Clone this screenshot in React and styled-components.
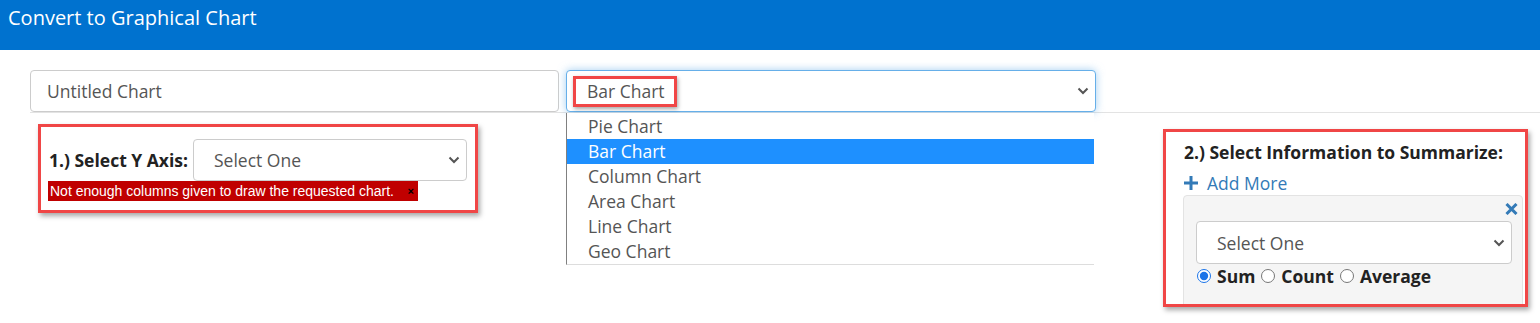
import React from "react";
import styled, { createGlobalStyle } from "styled-components";

const Global = createGlobalStyle`
  html, body { margin: 0; padding: 0; background: #fff; }
  body { font-family: "Open Sans", "Noto Sans", sans-serif; color: #333; }
`;

const Page = styled.div`
  width: 1540px;
  height: 323px;
  overflow: hidden;
  position: relative;
`;

const Header = styled.header`
  height: 50px;
  background: #0072cf;
  padding: 4px 0 0 8px;
  box-sizing: border-box;
`;

const Title = styled.h1`
  margin: 0;
  font-size: 20px;
  font-weight: 400;
  line-height: 27px;
  color: #fff;
`;

const Body = styled.div`
  padding: 20px 0 0 30px;
`;

const TopRow = styled.div`
  display: flex;
  gap: 7px;
  border-bottom: 1px solid #e3e3e3;
`;

const Field = styled.div`
  box-sizing: border-box;
  width: ${(p) => p.$w}px;
  height: ${(p) => p.$h || 42}px;
  border: 1px solid ${(p) => (p.$focus ? "#66afe9" : "#ccc")};
  box-shadow: ${(p) => (p.$focus ? "0 0 8px rgba(102,175,233,.6)" : "none")};
  border-radius: 4px;
  display: flex;
  align-items: center;
  padding: 0 ${(p) => p.$pr || 0}px 0 ${(p) => p.$pl}px;
  font-size: 17.5px;
  color: #555;
  background: #fff;
  position: relative;
`;

const FieldText = styled.span`
  flex: 1;
  white-space: nowrap;
`;

const Chevron = styled.svg`
  width: 12px;
  height: 8px;
  flex: none;
`;

const SelectWrap = styled.div`
  position: relative;
`;

const Annot = styled.span`
  position: absolute;
  left: ${(p) => p.$l}px;
  top: ${(p) => p.$t}px;
  width: ${(p) => p.$w}px;
  height: ${(p) => p.$h}px;
  border: 3px solid #f04646;
  box-sizing: border-box;
  box-shadow: 1px 2px 4px rgba(0, 0, 0, 0.35);
`;

const Dropdown = styled.ul`
  position: absolute;
  left: 0;
  top: calc(100% + 1px);
  width: 528px;
  margin: 0;
  padding: 1px 0 0;
  list-style: none;
  background: #fff;
  border-left: 1px solid #808080;
  border-bottom: 1px solid #ddd;
  box-sizing: border-box;
  z-index: 5;
`;

const Option = styled.li`
  height: 25px;
  line-height: 25px;
  padding-left: 21px;
  font-size: 17.5px;
  color: ${(p) => (p.$sel ? "#fff" : "#555")};
  background: ${(p) => (p.$sel ? "#1e90ff" : "transparent")};
`;

const Sections = styled.div`
  display: flex;
  justify-content: space-between;
  align-items: flex-start;
  padding: 0 12px 0 8px;
`;

const RedBox = styled.section`
  box-sizing: border-box;
  width: ${(p) => p.$w}px;
  height: ${(p) => p.$h}px;
  margin-top: ${(p) => p.$mt}px;
  border: 3px solid #f04646;
  box-shadow: 2px 3px 5px rgba(0, 0, 0, 0.35);
  overflow: hidden;
  padding: ${(p) => p.$pad};
`;

const AxisRow = styled.div`
  display: flex;
  align-items: center;
  gap: 5px;
`;

const Label = styled.span`
  font-size: 17.5px;
  font-weight: 700;
  color: #222;
  white-space: nowrap;
`;

const ErrorBar = styled.div`
  width: 370px;
  height: 20px;
  background: #c00000;
  display: flex;
  align-items: center;
  padding: 0 4px 0 2px;
  box-sizing: border-box;
  font-family: "Liberation Sans", Arial, sans-serif;
  font-size: 14px;
  color: #fff;
  margin-left: -1px;
`;

const ErrorText = styled.span`
  flex: 1;
  white-space: nowrap;
`;

const ErrorClose = styled.span`
  color: #000;
  font-size: 11px;
  font-weight: 700;
`;

const BoxTitle = styled.div`
  font-size: 17.5px;
  font-weight: 700;
  line-height: 24px;
  color: #222;
  white-space: nowrap;
  margin-top: 8px;
`;

const AddMore = styled.a`
  display: flex;
  align-items: center;
  gap: 9px;
  margin-top: 7px;
  height: 24px;
  font-size: 17.5px;
  color: #337ab7;
  text-decoration: none;
`;

const Panel = styled.div`
  box-sizing: border-box;
  width: 340px;
  height: 130px;
  margin: 0 0 0 -1px;
  background: #f5f5f5;
  border: 1px solid #e3e3e3;
  border-radius: 4px;
  padding: 7px 10px 0 12px;
`;

const CloseRow = styled.div`
  display: flex;
  justify-content: flex-end;
  height: 12px;
  margin-right: -6px;
  margin-bottom: 6px;
`;

const RadioRow = styled.div`
  display: flex;
  align-items: center;
  margin-top: 0;
  font-size: 17.5px;
  font-weight: 700;
  color: #222;
`;

const Radio = styled.input.attrs({ type: "radio" })`
  width: 14px;
  height: 14px;
  margin: 0 6px 0 1px;
  accent-color: #1a73e8;
`;

const RadioLabel = styled.label`
  display: flex;
  align-items: center;
  margin-right: 5px;
`;

const ChevronIcon = () => (
  <Chevron viewBox="0 0 12 8">
    <path d="M1.5 1.5 L6 6 L10.5 1.5" fill="none" stroke="#555" strokeWidth="2" />
  </Chevron>
);

const PlusIcon = () => (
  <svg width="14" height="14" viewBox="0 0 14 14">
    <rect x="5.5" y="0" width="3" height="14" fill="#337ab7" />
    <rect x="0" y="5.5" width="14" height="3" fill="#337ab7" />
  </svg>
);

const CloseIcon = () => (
  <svg width="13" height="12" viewBox="0 0 13 12">
    <path d="M1.5 1 L11.5 11 M11.5 1 L1.5 11" stroke="#337ab7" strokeWidth="3" />
  </svg>
);

const chartTypes = ["Pie Chart", "Bar Chart", "Column Chart", "Area Chart", "Line Chart", "Geo Chart"];

export default function App() {
  return (
    <Page>
      <Global />
      <Header>
        <Title>Convert to Graphical Chart</Title>
      </Header>
      <Body>
        <TopRow>
          <Field $w={529} $pl={16}>
            <FieldText>Untitled Chart</FieldText>
          </Field>
          <SelectWrap>
            <Field $w={530} $pl={20} $pr={6} $focus>
              <FieldText>Bar Chart</FieldText>
              <ChevronIcon />
              <Annot $l={6} $t={5} $w={104} $h={31} />
            </Field>
            <Dropdown>
              {chartTypes.map((c) => (
                <Option key={c} $sel={c === "Bar Chart"}>
                  {c}
                </Option>
              ))}
            </Dropdown>
          </SelectWrap>
        </TopRow>
        <Sections>
          <RedBox $w={440} $h={89} $mt={11} $pad="12px 0 0 8px">
            <AxisRow>
              <Label>1.) Select Y Axis:</Label>
              <Field $w={274} $pl={20} $pr={6}>
                <FieldText>Select One</FieldText>
                <ChevronIcon />
              </Field>
            </AxisRow>
            <ErrorBar>
              <ErrorText>Not enough columns given to draw the requested chart.</ErrorText>
              <ErrorClose>×</ErrorClose>
            </ErrorBar>
          </RedBox>
          <RedBox $w={365} $h={178} $mt={16} $pad="0 0 0 18px">
            <BoxTitle>2.) Select Information to Summarize:</BoxTitle>
            <AddMore href="#">
              <PlusIcon />
              Add More
            </AddMore>
            <Panel>
              <CloseRow>
                <CloseIcon />
              </CloseRow>
              <Field $w={316} $h={43} $pl={20} $pr={6}>
                <FieldText>Select One</FieldText>
                <ChevronIcon />
              </Field>
              <RadioRow>
                <RadioLabel>
                  <Radio name="agg" defaultChecked />
                  Sum
                </RadioLabel>
                <RadioLabel>
                  <Radio name="agg" />
                  Count
                </RadioLabel>
                <RadioLabel>
                  <Radio name="agg" />
                  Average
                </RadioLabel>
              </RadioRow>
            </Panel>
          </RedBox>
        </Sections>
      </Body>
    </Page>
  );
}
